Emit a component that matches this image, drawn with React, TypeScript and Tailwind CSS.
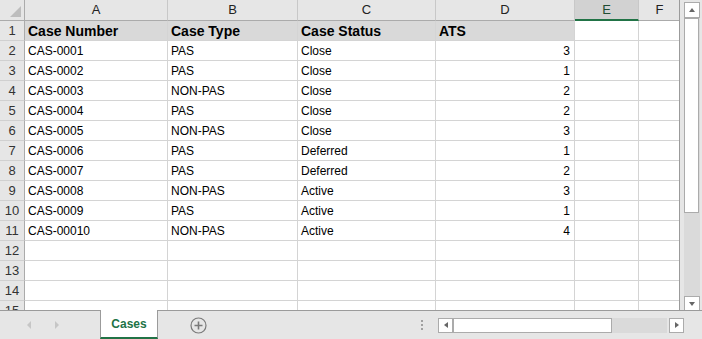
const cols = [
  { key: 'A', w: 'w-[143px]' },
  { key: 'B', w: 'w-[130px]' },
  { key: 'C', w: 'w-[138px]' },
  { key: 'D', w: 'w-[139px]' },
  { key: 'E', w: 'w-[64px]' },
  { key: 'F', w: 'w-[41px]' },
];

const rows = [
  ['CAS-0001', 'PAS', 'Close', '3'],
  ['CAS-0002', 'PAS', 'Close', '1'],
  ['CAS-0003', 'NON-PAS', 'Close', '2'],
  ['CAS-0004', 'PAS', 'Close', '2'],
  ['CAS-0005', 'NON-PAS', 'Close', '3'],
  ['CAS-0006', 'PAS', 'Deferred', '1'],
  ['CAS-0007', 'PAS', 'Deferred', '2'],
  ['CAS-0008', 'NON-PAS', 'Active', '3'],
  ['CAS-0009', 'PAS', 'Active', '1'],
  ['CAS-00010', 'NON-PAS', 'Active', '4'],
];

const headers = ['Case Number', 'Case Type', 'Case Status', 'ATS'];

const RowNum = ({ n }: { n: number }) => (
  <div className="w-[25px] shrink-0 h-full flex items-center justify-center pt-px bg-[#e6e6e6] border-r border-b border-r-[#ababab] border-b-[#d0d0d0] text-[13px] text-[#333]">
    {n}
  </div>
);

const Cell = ({ w, children, right, last }: { w: string; children?: React.ReactNode; right?: boolean; last?: boolean }) => (
  <div
    className={`${w} shrink-0 h-full flex items-center pt-px px-[3px] border-b border-[#d4d4d4] ${last ? '' : 'border-r'} ${right ? 'justify-end pr-[4px]' : ''} overflow-hidden whitespace-nowrap`}
  >
    {children}
  </div>
);

const Triangle = ({ dir }: { dir: 'up' | 'down' | 'left' | 'right' }) => {
  const pts = {
    up: '1,6 7,6 4,2',
    down: '1,2 7,2 4,6',
    left: '6,1 6,7 2,4',
    right: '2,1 2,7 6,4',
  }[dir];
  return (
    <svg width="8" height="8" viewBox="0 0 8 8">
      <polygon points={pts} fill="#666" />
    </svg>
  );
};

export default function App() {
  return (
    <div className="w-[702px] h-[339px] flex flex-col bg-white overflow-hidden font-['Liberation_Sans',sans-serif] text-black">
      <div className="flex h-[311px]">
        {/* grid */}
        <div className="w-[680px] h-full overflow-hidden border-r border-[#9b9b9b] border-b">
          {/* column header */}
          <div className="flex h-[21px] bg-[#e6e6e6]">
            <div className="w-[25px] shrink-0 h-full relative border-r border-b border-[#ababab]">
              <svg className="absolute right-[3px] bottom-[3px]" width="11" height="11" viewBox="0 0 11 11">
                <polygon points="11,0 11,11 0,11" fill="#bdbdbd" />
              </svg>
            </div>
            {cols.map((c, i) => (
              <div
                key={c.key}
                className={`${c.w} shrink-0 h-full flex items-center justify-center text-[13px] ${i < cols.length - 1 ? 'border-r border-r-[#c8c8c8]' : ''} ${
                  c.key === 'E'
                    ? 'bg-[#d2d2d2] border-b-2 border-b-[#217346] text-[#1e4d33]'
                    : 'border-b border-b-[#ababab] text-[#222]'
                }`}
              >
                {c.key}
              </div>
            ))}
          </div>
          {/* row 1 */}
          <div className="flex h-[20px]">
            <RowNum n={1} />
            {headers.map((h, i) => (
              <div
                key={h}
                className={`${cols[i].w} shrink-0 h-full flex items-center pt-px px-[3px] bg-[#d9d9d9] border-r border-b border-[#d4d4d4] text-[14px] font-bold whitespace-nowrap`}
              >
                {h}
              </div>
            ))}
            <Cell w={cols[4].w} />
            <Cell w={cols[5].w} last />
          </div>
          {rows.map((r, i) => (
            <div key={i} className="flex h-[20px] text-[12px]">
              <RowNum n={i + 2} />
              <Cell w={cols[0].w}>{r[0]}</Cell>
              <Cell w={cols[1].w}>{r[1]}</Cell>
              <Cell w={cols[2].w}>{r[2]}</Cell>
              <Cell w={cols[3].w} right>
                {r[3]}
              </Cell>
              <Cell w={cols[4].w} />
              <Cell w={cols[5].w} last />
            </div>
          ))}
          {[12, 13, 14, 15].map((n) => (
            <div key={n} className="flex h-[20px] text-[12px]">
              <RowNum n={n} />
              {cols.map((c, i) => (
                <Cell key={c.key} w={c.w} last={i === cols.length - 1} />
              ))}
            </div>
          ))}
        </div>
        {/* vertical scrollbar */}
        <div className="w-[22px] h-full bg-[#e6e6e6] flex flex-col items-center pt-[2px] pl-[2px]">
          <div className="w-[16px] h-[16px] bg-white border border-[#ababab] flex items-center justify-center">
            <Triangle dir="up" />
          </div>
          <div className="w-[16px] flex-1 bg-[#dadada] flex flex-col">
            <div className="w-[15px] h-[195px] bg-white border border-[#ababab]" />
          </div>
          <div className="w-[16px] h-[15px] bg-white border border-[#ababab] flex items-center justify-center">
            <Triangle dir="down" />
          </div>
        </div>
      </div>
      {/* tab bar */}
      <div className="flex-1 flex bg-[#e6e6e6] border-t border-[#9b9b9b] -mt-px">
        <div className="w-[100px] flex items-center pl-[25px] gap-[20px]">
          <svg width="8" height="10" viewBox="0 0 8 10">
            <polygon points="6,1 6,9 2,5" fill="#c6c6c6" />
          </svg>
          <svg width="8" height="10" viewBox="0 0 8 10">
            <polygon points="2,1 2,9 6,5" fill="#c6c6c6" />
          </svg>
        </div>
        <div className="w-[58px] -mt-px bg-white border-x border-[#9b9b9b] border-b-2 border-b-[#217346] flex items-center justify-center text-[12px] font-bold text-[#217346]">
          Cases
        </div>
        <div className="w-[80px] flex items-center justify-center">
          <svg width="17" height="17" viewBox="0 0 17 17">
            <circle cx="8.5" cy="8.5" r="7.5" fill="none" stroke="#7a7a7a" strokeWidth="1.2" />
            <path d="M8.5 4.5v8M4.5 8.5h8" stroke="#7a7a7a" strokeWidth="1.6" />
          </svg>
        </div>
        <div className="flex-1 flex items-center justify-end pr-[15px]">
          <div className="flex flex-col gap-[2px]">
            <div className="w-[2px] h-[2px] bg-[#a0a0a0]" />
            <div className="w-[2px] h-[2px] bg-[#a0a0a0]" />
            <div className="w-[2px] h-[2px] bg-[#a0a0a0]" />
          </div>
        </div>
        <div className="w-[246px] flex items-center">
          <div className="flex w-full h-[15px]">
            <div className="w-[15px] h-full bg-white border border-[#ababab] flex items-center justify-center">
              <Triangle dir="left" />
            </div>
            <div className="flex-1 bg-[#dadada] flex">
              <div className="w-[159px] h-full bg-white border border-[#ababab]" />
            </div>
            <div className="w-[2px]" />
            <div className="w-[15px] h-full bg-white border border-[#ababab] flex items-center justify-center">
              <Triangle dir="right" />
            </div>
          </div>
        </div>
        <div className="w-[18px]" />
      </div>
    </div>
  );
}
